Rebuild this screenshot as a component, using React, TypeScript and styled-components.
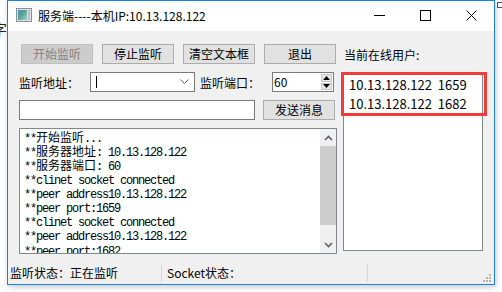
import React from "react";
import styled, { createGlobalStyle, css } from "styled-components";

const UI_FONT = `"Noto Sans CJK SC", "Noto Sans", sans-serif`;
const MONO_FONT = `"Liberation Mono", "Noto Sans CJK SC", monospace`;

const GlobalStyle = createGlobalStyle`
  html, body { margin: 0; padding: 0; background: #ffffff; }
  body { width: 502px; height: 292px; overflow: hidden; position: relative; font-family: ${UI_FONT}; }
`;

const logLines = [
  "**开始监听...",
  "**服务器地址: 10.13.128.122",
  "**服务器端口: 60",
  "**clinet socket connected",
  "**peer address10.13.128.122",
  "**peer port:1659",
  "**clinet socket connected",
  "**peer address10.13.128.122",
  "**peer port:1682",
];

const onlineUsers = ["10.13.128.122  1659", "10.13.128.122  1682"];

export default function App() {
  return (
    <>
      <GlobalStyle />
      <Desktop>
        <BehindGlyph>字</BehindGlyph>
        <Window>
          <TitleBar>
            <AppIcon />
            <Title>服务端----本机IP:10.13.128.122</Title>
            <Controls>
              <CtrlBtn>
                <svg width="11" height="11" viewBox="0 0 11 11">
                  <path d="M0 5.5h11" stroke="#000" strokeWidth="1" />
                </svg>
              </CtrlBtn>
              <CtrlBtn>
                <svg width="11" height="11" viewBox="0 0 11 11">
                  <rect x="0.5" y="0.5" width="10" height="10" fill="none" stroke="#000" />
                </svg>
              </CtrlBtn>
              <CtrlBtn>
                <svg width="11" height="11" viewBox="0 0 11 11">
                  <path d="M0.5 0.5l10 10M10.5 0.5l-10 10" stroke="#000" strokeWidth="1" />
                </svg>
              </CtrlBtn>
            </Controls>
          </TitleBar>

          <Body>
            <LeftColumn>
              <ButtonRow>
                <PushButton disabled>开始监听</PushButton>
                <PushButton>停止监听</PushButton>
                <PushButton>清空文本框</PushButton>
                <PushButton>退出</PushButton>
              </ButtonRow>

              <FormRow>
                <FieldLabel $width={71}>监听地址：</FieldLabel>
                <Combo>
                  <Caret />
                  <svg width="9" height="6" viewBox="0 0 9 6">
                    <path d="M0.5 0.5l4 4 4-4" fill="none" stroke="#606060" />
                  </svg>
                </Combo>
                <FieldLabel $width={72} $gap={5}>监听端口：</FieldLabel>
                <SpinBox>
                  <SpinValue>60</SpinValue>
                  <SpinButtons>
                    <SpinArrow>
                      <svg width="7" height="4" viewBox="0 0 7 4">
                        <path d="M3.5 0L7 4H0z" fill="#000" />
                      </svg>
                    </SpinArrow>
                    <SpinArrow>
                      <svg width="7" height="4" viewBox="0 0 7 4">
                        <path d="M0 0h7L3.5 4z" fill="#000" />
                      </svg>
                    </SpinArrow>
                  </SpinButtons>
                </SpinBox>
              </FormRow>

              <FormRow>
                <MessageInput />
                <PushButton $gap={8}>发送消息</PushButton>
              </FormRow>

              <LogBox>
                <LogText>
                  {logLines.map((line, i) => (
                    <LogLine key={i}>{renderMixed(line)}</LogLine>
                  ))}
                </LogText>
                <ScrollBar>
                  <ScrollArrow>
                    <svg width="9" height="6" viewBox="0 0 9 6">
                      <path d="M1 5l3.5-3.5L8 5" fill="none" stroke="#606060" strokeWidth="1.6" />
                    </svg>
                  </ScrollArrow>
                  <ScrollTrack>
                    <ScrollThumb />
                  </ScrollTrack>
                  <ScrollArrow>
                    <svg width="9" height="6" viewBox="0 0 9 6">
                      <path d="M1 1l3.5 3.5L8 1" fill="none" stroke="#606060" strokeWidth="1.6" />
                    </svg>
                  </ScrollArrow>
                </ScrollBar>
              </LogBox>
            </LeftColumn>

            <RightColumn>
              <ListTitle>当前在线用户:</ListTitle>
              <UserList>
                {onlineUsers.map((u) => (
                  <UserItem key={u}>{u}</UserItem>
                ))}
                <Highlight />
              </UserList>
            </RightColumn>
          </Body>

          <StatusBar>
            <StatusCell $width={151}>监听状态：正在监听</StatusCell>
            <StatusDivider />
            <StatusCell $width={200}>Socket状态：</StatusCell>
            <StatusDivider />
            <SizeGrip>
              <svg width="8" height="8" viewBox="0 0 8 8">
                {[
                  [6, 0],
                  [3, 3],
                  [6, 3],
                  [0, 6],
                  [3, 6],
                  [6, 6],
                ].map(([x, y]) => (
                  <rect key={`${x}-${y}`} x={x} y={y} width="2" height="2" fill="#b4b4b4" />
                ))}
              </svg>
            </SizeGrip>
          </StatusBar>
        </Window>
        <RightEdgeMark />
      </Desktop>
    </>
  );
}

// CJK runs in the log are drawn at the full 12px, latin at a narrow mono pitch
function renderMixed(text: string) {
  const parts = text.split(/([\u3000-\u9fff\uff00-\uffef]+)/);
  return parts.map((p, i) =>
    /[\u3000-\u9fff\uff00-\uffef]/.test(p) ? <Cjk key={i}>{p}</Cjk> : <span key={i}>{p}</span>
  );
}

const AppIcon = () => (
  <IconBox>
    <svg width="16" height="14" viewBox="0 0 16 14">
      <defs>
        <linearGradient id="ig" x1="0" y1="0" x2="1" y2="1">
          <stop offset="0" stopColor="#3d8fd1" />
          <stop offset="0.5" stopColor="#5aa88a" />
          <stop offset="1" stopColor="#9fd0e8" />
        </linearGradient>
      </defs>
      <rect x="0.5" y="0.5" width="15" height="13" fill="#dfe3e8" stroke="#8a9098" />
      <rect x="2" y="2" width="9" height="10" fill="url(#ig)" />
      <rect x="12" y="2" width="2" height="10" fill="#b8c0c8" />
    </svg>
  </IconBox>
);

const Desktop = styled.div`
  position: relative;
  width: 502px;
  height: 292px;
  background: #ffffff;
`;

const BehindGlyph = styled.div`
  position: absolute;
  left: -8px;
  top: 18px;
  font-size: 15px;
  color: #222;
  font-family: ${UI_FONT};
`;

const RightEdgeMark = styled.div`
  position: absolute;
  left: 497px;
  top: 2px;
  width: 5px;
  height: 4px;
  border: 1px solid #555;
  border-right: none;
`;

const Window = styled.div`
  position: absolute;
  left: 7px;
  top: 0;
  width: 486px;
  height: 283px;
  border: 1px solid #1883d7;
  background: #f0f0f0;
  display: flex;
  flex-direction: column;
  box-shadow: 1px 2px 6px rgba(0, 0, 0, 0.22);
`;

const TitleBar = styled.div`
  height: 30px;
  flex: 0 0 30px;
  background: #ffffff;
  display: flex;
  align-items: center;
  padding-left: 8px;
`;

const IconBox = styled.div`
  width: 16px;
  height: 14px;
  display: flex;
  margin-top: -2px;
`;

const Title = styled.div`
  margin-left: 6px;
  font-size: 12px;
  color: #000;
  flex: 1;
  margin-top: -2px;
`;

const Controls = styled.div`
  display: flex;
  height: 100%;
`;

const CtrlBtn = styled.div`
  width: 46px;
  display: flex;
  align-items: center;
  justify-content: center;
  margin-top: -2px;
`;

const Body = styled.div`
  flex: 1;
  display: flex;
  gap: 6px;
  padding: 13px 10px 0 11px;
`;

const LeftColumn = styled.div`
  width: 318px;
  display: flex;
  flex-direction: column;
  gap: 8px;
`;

const RightColumn = styled.div`
  width: 140px;
  display: flex;
  flex-direction: column;
`;

const ButtonRow = styled.div`
  display: flex;
  gap: 9px;
  padding-left: 2px;
`;

const PushButton = styled.button<{ $gap?: number }>`
  box-sizing: border-box;
  width: 72px;
  height: 20px;
  flex: 0 0 72px;
  padding: 0;
  margin: 0 0 0 ${(p) => p.$gap ?? 0}px;
  font-family: ${UI_FONT};
  font-size: 12px;
  line-height: 18px;
  color: #000;
  background: #e1e1e1;
  border: 1px solid #adadad;
  border-radius: 0;
  ${(p) =>
    p.disabled &&
    css`
      color: #838383;
      background: #cccccc;
      border-color: #bfbfbf;
    `}
`;

const FormRow = styled.div`
  display: flex;
  align-items: center;
  height: 20px;
`;

const FieldLabel = styled.div<{ $width: number; $gap?: number }>`
  width: ${(p) => p.$width}px;
  flex: 0 0 ${(p) => p.$width}px;
  margin-left: ${(p) => p.$gap ?? 0}px;
  font-size: 12px;
  color: #000;
  white-space: nowrap;
`;

const Combo = styled.div`
  box-sizing: border-box;
  width: 105px;
  height: 20px;
  background: #fff;
  border: 1px solid #7a7a7a;
  display: flex;
  align-items: center;
  justify-content: space-between;
  padding: 0 5px 0 5px;
`;

const Caret = styled.div`
  width: 1px;
  height: 12px;
  background: #000;
`;

const SpinBox = styled.div`
  box-sizing: border-box;
  width: 62px;
  height: 20px;
  background: #fff;
  border: 1px solid #7a7a7a;
  display: flex;
  align-items: stretch;
`;

const SpinValue = styled.div`
  flex: 1;
  font-size: 12px;
  line-height: 18px;
  padding-left: 1px;
  color: #000;
`;

const SpinButtons = styled.div`
  width: 11px;
  margin: 1px 1px 1px 0;
  display: flex;
  flex-direction: column;
  gap: 1px;
`;

const SpinArrow = styled.div`
  flex: 1;
  display: flex;
  align-items: center;
  justify-content: center;
  background: #e6e6e6;
  border: 1px solid #c9c9c9;
`;

const MessageInput = styled.div`
  box-sizing: border-box;
  width: 236px;
  height: 20px;
  background: #fff;
  border: 1px solid #7a7a7a;
`;

const LogBox = styled.div`
  box-sizing: border-box;
  height: 126px;
  background: #fff;
  border: 1px solid #828790;
  display: flex;
  overflow: hidden;
`;

const LogText = styled.div`
  flex: 1;
  padding: 2px 0 0 4px;
  font-family: ${MONO_FONT};
  font-size: 12px;
  letter-spacing: -1.2px;
  color: #000;
  overflow: hidden;
`;

const LogLine = styled.div`
  height: 14.2px;
  line-height: 14.2px;
  white-space: pre;
`;

const Cjk = styled.span`
  font-family: "Noto Sans CJK SC", sans-serif;
  font-size: 12px;
  line-height: 1;
  letter-spacing: 0;
`;

const ScrollBar = styled.div`
  width: 16px;
  flex: 0 0 16px;
  background: #f0f0f0;
  display: flex;
  flex-direction: column;
`;

const ScrollArrow = styled.div`
  height: 17px;
  display: flex;
  align-items: center;
  justify-content: center;
`;

const ScrollTrack = styled.div`
  flex: 1;
  display: flex;
  flex-direction: column;
`;

const ScrollThumb = styled.div`
  height: 79px;
  background: #cdcdcd;
`;

const ListTitle = styled.div`
  height: 20px;
  line-height: 22px;
  padding-left: 1px;
  font-size: 12px;
  color: #000;
`;

const UserList = styled.div`
  position: relative;
  box-sizing: border-box;
  margin-top: 9px;
  height: 178px;
  background: #fff;
  border: 1px solid #828790;
  padding: 1px 0 0 5px;
`;

const UserItem = styled.div`
  height: 19px;
  line-height: 19px;
  font-size: 13px;
  color: #000;
  white-space: pre;
`;

const Highlight = styled.div`
  position: absolute;
  left: -3px;
  top: -2px;
  width: 140px;
  height: 38px;
  border: 3px solid #f23b3b;
`;

const StatusBar = styled.div`
  height: 22px;
  flex: 0 0 22px;
  display: flex;
  align-items: center;
  padding-left: 2px;
  position: relative;
`;

const StatusCell = styled.div<{ $width: number }>`
  width: ${(p) => p.$width}px;
  font-size: 12px;
  color: #000;
  line-height: 18px;
`;

const StatusDivider = styled.div`
  width: 1px;
  height: 18px;
  background: #d7d7d7;
  margin-right: 5px;
`;

const SizeGrip = styled.div`
  position: absolute;
  right: 3px;
  bottom: 2px;
  display: flex;
`;
